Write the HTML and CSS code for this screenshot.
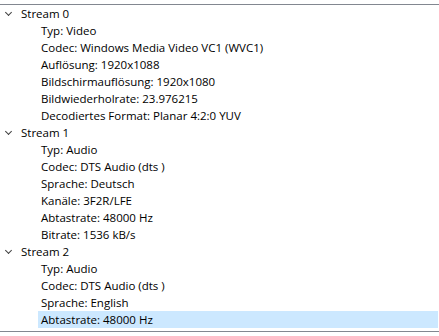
FILE: index.html
```html
<!DOCTYPE html>
<html lang="de">
<head>
  <meta charset="UTF-8">
  <title>Stream-Informationen</title>
  <link rel="stylesheet" href="styles.css">
</head>
<body>
  <div class="tree">
    <!-- Stream 0 -->
    <div class="node">
      <div class="head"><span class="chev"></span>Stream 0</div>
      <div class="item">Typ: Video</div>
      <div class="item">Codec: Windows Media Video VC1 (WVC1)</div>
      <div class="item">Auflösung: 1920x1088</div>
      <div class="item">Bildschirmauflösung: 1920x1080</div>
      <div class="item">Bildwiederholrate: 23.976215</div>
      <div class="item">Decodiertes Format: Planar 4:2:0 YUV</div>
    </div>

    <!-- Stream 1 -->
    <div class="node">
      <div class="head"><span class="chev"></span>Stream 1</div>
      <div class="item">Typ: Audio</div>
      <div class="item">Codec: DTS Audio (dts )</div>
      <div class="item">Sprache: Deutsch</div>
      <div class="item">Kanäle: 3F2R/LFE</div>
      <div class="item">Abtastrate: 48000 Hz</div>
      <div class="item">Bitrate: 1536 kB/s</div>
    </div>

    <!-- Stream 2 -->
    <div class="node">
      <div class="head"><span class="chev"></span>Stream 2</div>
      <div class="item">Typ: Audio</div>
      <div class="item">Codec: DTS Audio (dts )</div>
      <div class="item">Sprache: English</div>
      <div class="item selected">Abtastrate: 48000 Hz</div>
    </div>
  </div>
</body>
</html>
```

FILE: styles.css
```css
* {
  box-sizing: border-box;
  margin: 0;
  padding: 0;
}

body {
  background: #fff;
  font-family: "Open Sans", "Noto Sans", sans-serif;
  font-size: 11.5px;
  color: #000;
  padding: 4px 0;
}

.tree {
  border-top: 1px solid #828790;
  border-bottom: 1px solid #828790;
  padding-bottom: 3px;
}

.head,
.item {
  height: 17px;
  line-height: 17px;
  white-space: nowrap;
}

.head {
  display: flex;
  align-items: center;
  padding-left: 4px;
}

.chev {
  width: 8px;
  height: 8px;
  margin-right: 9px;
  position: relative;
}

.chev::before {
  content: "";
  position: absolute;
  left: 2px;
  top: 0;
  width: 4px;
  height: 4px;
  border-right: 1px solid #404040;
  border-bottom: 1px solid #404040;
  transform: rotate(45deg);
}

.item {
  margin-left: 38px;
  margin-right: 1px;
  padding-left: 3px;
}

.item.selected {
  background: #cce8ff;
}
```
